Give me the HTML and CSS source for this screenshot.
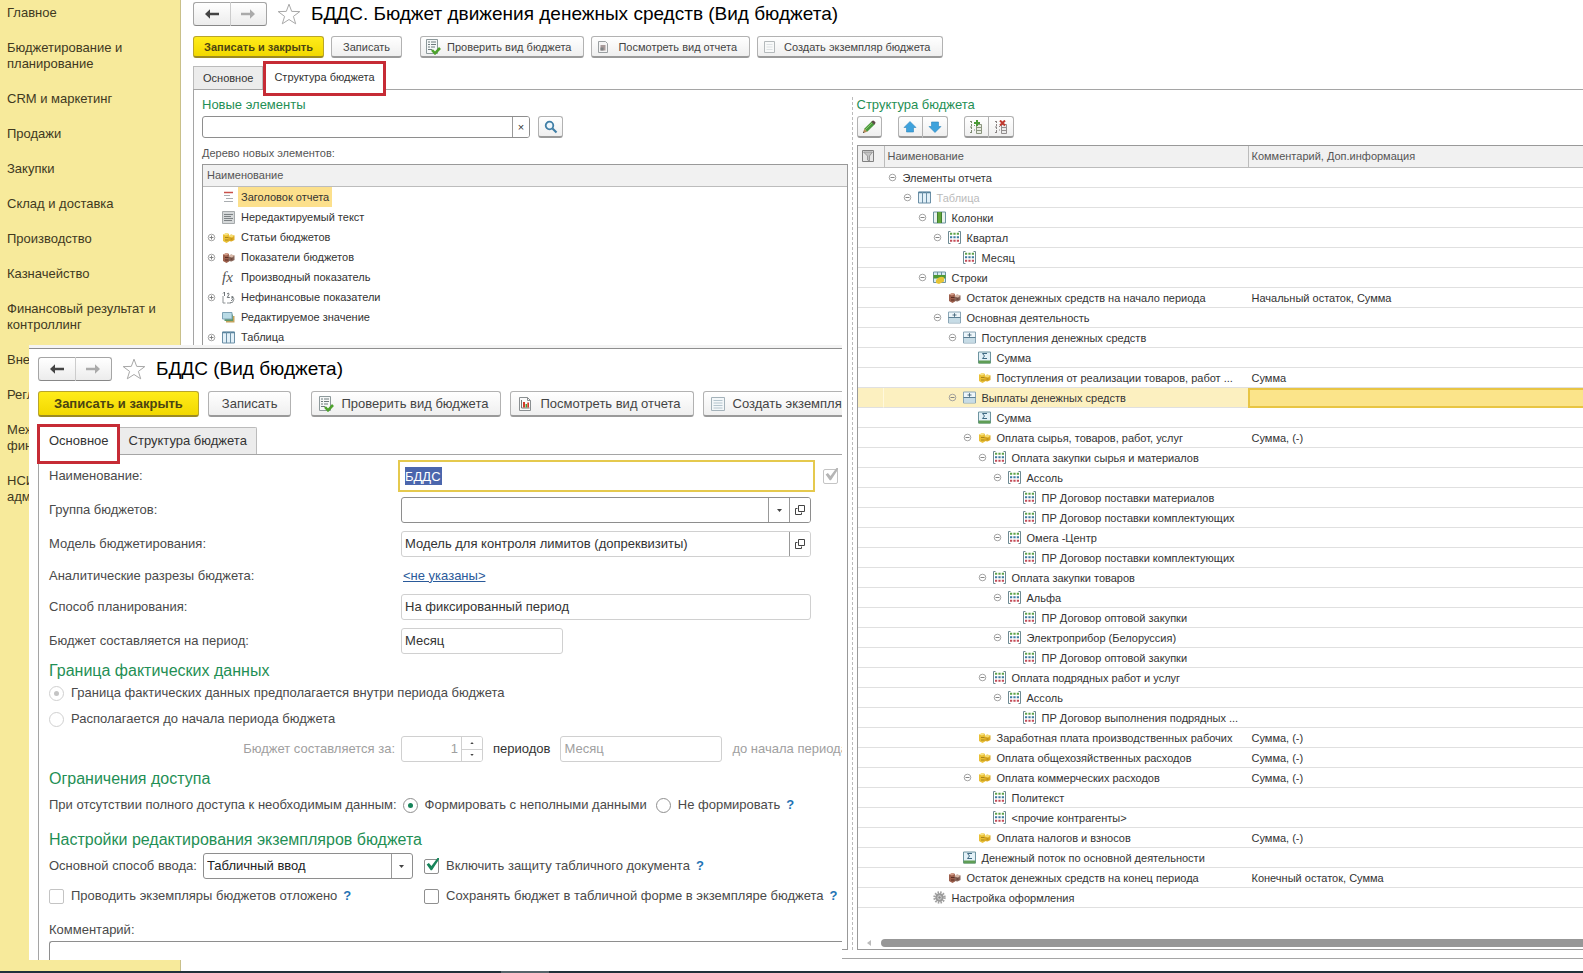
FILE: index.html
```html
<!DOCTYPE html>
<html lang="ru">
<head>
<meta charset="utf-8">
<title>БДДС. Бюджет движения денежных средств (Вид бюджета)</title>
<link rel="stylesheet" href="styles.css">
</head>
<body>
<svg class="sprite" aria-hidden="true">
  <symbol id="back" viewBox="0 0 14 10"><path d="M0 5 5 0.3 5 3.8 14 3.8 14 6.2 5 6.2 5 9.7z" fill="currentColor"/></symbol>
  <symbol id="fwd" viewBox="0 0 14 10"><path d="M14 5 9 0.3 9 3.8 0 3.8 0 6.2 9 6.2 9 9.7z" fill="currentColor"/></symbol>
  <symbol id="star" viewBox="0 0 24 22"><path d="M12 1.2 14.7 8.4 22.8 8.6 16.4 13.4 18.7 20.8 12 16.5 5.3 20.8 7.6 13.4 1.2 8.6 9.3 8.4z" fill="#fff" stroke="#a8a8a8"/></symbol>
  <symbol id="check-doc" viewBox="0 0 16 16"><path d="M1.5 .5h11v14h-11z" fill="#f5f7f7" stroke="#8d999b"/><path d="M3 3h2M6 3h5M3 5.5h2M6 5.5h5M3 8h2M6 8h4M3 10.500h4" stroke="#6d7a7c"/><path d="m7 11 3 3.300 5-5.300" fill="none" stroke="#4da22c" stroke-width="2.600"/></symbol>
  <symbol id="report" viewBox="0 0 16 16"><path d="M2.500 1.500h8l3 3v10h-11z" fill="#fafafa" stroke="#8a8f91"/><path d="M10.500 1.500v3h3" fill="none" stroke="#8a8f91"/><path d="M4.500 4v8h8" fill="none" stroke="#777"/><path d="M6 6h2v5.500H6z" fill="#d33a28"/><path d="M8.500 8h1.500v3.500H8.500z" fill="#4a9b3c"/><path d="M10.300 6.500h1.700v5h-1.700z" fill="#d33a28"/></symbol>
  <symbol id="report-gray" viewBox="0 0 16 16"><path d="M2.500 2.500h7l2 2v9h-9z" fill="#f4f4f4" stroke="#9a9fa1"/><path d="M4.500 6h5v5.500h-5z" fill="#a89a9a"/><path d="M4.500 8.500h3v3h-3z" fill="#7f8385"/></symbol>
  <symbol id="sheet" viewBox="0 0 16 16"><path d="M1.500 1.500h13v13h-13z" fill="#f3f7f9" stroke="#a4b2ba"/><path d="M3.500 4.500h9M3.500 7h9M3.500 9.500h9M3.500 12h9" stroke="#b5c5ce"/></symbol>
  <symbol id="sheet-gray" viewBox="0 0 16 16"><path d="M2.500 2.500h10v11h-10z" fill="#f8f9f9" stroke="#b4b9bb"/><path d="M4.500 5.500h6M4.500 8h6M4.500 10.500h6" stroke="#dde1e3"/></symbol>
  <symbol id="search" viewBox="0 0 14 14"><circle cx="5.500" cy="5.500" r="3.800" fill="#eef6fb" stroke="#3f7ea6" stroke-width="1.800"/><path d="m8.500 8.500 4 4" stroke="#3f7ea6" stroke-width="2.200"/></symbol>
  <symbol id="pencil" viewBox="0 0 14 14"><path d="m1 13 1.200-4.200 3 3z" fill="#b98b55"/><path d="M2.200 8.800 9.600 1.500l3 3-7.400 7.300z" fill="#4a9a3d"/><path d="m3.200 9.800 7.400-7.300" stroke="#8cc56c"/><path d="m9.300 1.800 1.200-1.100q.8-.5 1.600.2l1.100 1.100q.7.900 0 1.600l-1 1.100z" fill="#5d4a48"/><path d="m1 13 .5-1.600 1 1.100z" fill="#333"/></symbol>
  <symbol id="up" viewBox="0 0 14 14"><path d="M7 1.500 13 7.500H10.500V12H3.500V7.500H1z" fill="#3ea2dc" stroke="#2d86bd" stroke-width=".6"/></symbol>
  <symbol id="down" viewBox="0 0 14 14"><path d="M7 12.500 1 6.500H3.500V2h7v4.500H13z" fill="#3ea2dc" stroke="#2d86bd" stroke-width=".6"/></symbol>
  <symbol id="list-add" viewBox="0 0 14 14"><path d="M2.500 1v12M1 1.500h3M1 7h3M1 12.500h3M5 5.500h1M5 10h1" stroke="#7c8a72" stroke-dasharray="2 1"/><path d="M7.500 4.500h5v9h-5zM7.500 7.500h5M7.500 10.500h5" fill="#e8ece2" stroke="#8b967f"/><path d="M8 0v6M5 3h6" stroke="#4a9a35" stroke-width="2"/></symbol>
  <symbol id="list-del" viewBox="0 0 14 14"><path d="M2.500 1v12M1 1.500h3M1 7h3M1 12.500h3M5 6.500h1M5 10h1" stroke="#8a8585" stroke-dasharray="2 1"/><path d="M7.500 4.500h5v9h-5zM7.500 7.500h5M7.500 10.500h5" fill="#ececec" stroke="#938f8f"/><path d="m6 .5 5 5M11 .5 6 5.500" stroke="#c0392f" stroke-width="2"/></symbol>
  <symbol id="funnel" viewBox="0 0 12 12"><path d="M.5.500h11v11H.5z" fill="#e6e6e6" stroke="#808080"/><path d="M1.500 2h9L7.500 6v5l-2-1V6z" fill="#c4c4c4" stroke="#8c8c8c" stroke-width=".8"/></symbol>
  <symbol id="plus" viewBox="0 0 9 9"><circle cx="4.500" cy="4.500" r="3.300" fill="#fff" stroke="#9a9a9a" stroke-width=".9"/><path d="M2.500 4.500h4M4.500 2.500v4" stroke="#777" stroke-width=".9"/></symbol>
  <symbol id="minus" viewBox="0 0 9 9"><circle cx="4.500" cy="4.500" r="3.300" fill="none" stroke="#9a9a9a" stroke-width=".9"/><path d="M2.500 4.500h4" stroke="#777" stroke-width=".9"/></symbol>
  <symbol id="heading" viewBox="0 0 13 13"><path d="M2 1.500h9" stroke="#c9504a" stroke-width="1.500"/><path d="M2 4.500h6M4 7.500h7M2 10.500h9" stroke="#a9adb0"/></symbol>
  <symbol id="text" viewBox="0 0 13 13"><path d="M.5.500h12v12H.5z" fill="#d5d8d9" stroke="#a5a9ab"/><path d="M2 3.500h9M2 5.500h7M2 7.500h9M2 9.500h8" stroke="#7c8184"/></symbol>
  <symbol id="gold" viewBox="0 0 13 13"><path d="M1 3.500 4.500 2 7 3v7.500L4.500 12 1 10z" fill="#e9bf35"/><path d="M1 3.500 4.500 2 7 3 4 4.500z" fill="#f8e486"/><path d="M6.500 5.500 9 3.500l3.500 1V9L9.500 10.500l-3-.5z" fill="#dca922"/><path d="m6.500 5.500 2.500-2 3.500 1L10 6.500z" fill="#f5dc70"/><path d="M3 6.500h3.500M3 9h3.500M8.500 8h2" stroke="#a8851c"/></symbol>
  <symbol id="brown" viewBox="0 0 13 13"><path d="M1 3.500 4.500 2 7 3v7.500L4.500 12 1 10z" fill="#9c5f4c"/><path d="M1 3.500 4.500 2 7 3 4 4.500z" fill="#d5a08c"/><path d="M6.500 5.500 9 3.500l3.500 1V9L9.500 10.500l-3-.5z" fill="#86655a"/><path d="m6.500 5.500 2.500-2 3.500 1L10 6.500z" fill="#d9b9a8"/><path d="M3 6.500h3.500M3 9h3.500M8.500 8h2" stroke="#5a2e24"/></symbol>
  <symbol id="numbers" viewBox="0 0 13 13"><path d="M1 5v7h2.500M5 12h4M10.500 5q3 3 0 6.500M10.500 11.500H8" fill="none" stroke="#8d9294"/><path d="M1 2.500 2.500 1v4M5 3q2-2 2 .3L5.300 6.500h2.500M9 6h2L9.800 7.500q1.700.5 0 2H9" fill="none" stroke="#60666a" stroke-width=".9"/></symbol>
  <symbol id="layers" viewBox="0 0 13 13"><path d="M4 5h8.500v6.500H4z" fill="#c3a35c"/><path d="M2.500 3.500h8.500V10H2.500z" fill="#5e9968"/><path d="M.5 1.500h9.500v6.500H.5z" fill="#b9dbe6" stroke="#7da2b5"/></symbol>
  <symbol id="table" viewBox="0 0 13 13"><path d="M.5 1h12v11H.5z" fill="#e2f0f8" stroke="#6b8fa6"/><path d="M.5 1.500h12" stroke="#57839d" stroke-width="1.500"/><path d="M4.500 1v11M8.500 1v11" stroke="#6b8fa6"/></symbol>
  <symbol id="columns" viewBox="0 0 13 13"><path d="M.5 1h12v11H.5z" fill="#e8f2ee" stroke="#6d94a0"/><path d="M4 1h5v11H4z" fill="#62a53a"/><path d="M4.500 1v11M8.500 1v11" stroke="#3f7d32"/></symbol>
  <symbol id="grid" viewBox="0 0 13 13"><path d="M2.500.5h-2v12h2M10.500.5h2v12h-2" fill="none" stroke="#6d8a93"/><path d="M2 2.800h2.200M5.400 2.800h2.200M8.800 2.800H11" stroke="#5ca14a" stroke-width="2"/><path d="M2 6.300h2.200M5.400 6.300h2.200M8.800 6.300H11" stroke="#3f7d9f" stroke-width="2"/><path d="M2 9.800h2.200M5.400 9.800h2.200M8.800 9.800H11" stroke="#c24c58" stroke-width="2"/></symbol>
  <symbol id="rows" viewBox="0 0 13 13"><path d="M.5 1h12v10.500H.5z" fill="#d8eaf2" stroke="#6d94a0"/><path d="M.5 4h12v3.500H.5z" fill="#4e9a35"/><path d="M4.500 1v3M8.500 1v3" stroke="#6d94a0"/><path d="M3 9q4-5 8-2.500v4L6 13 3 12z" fill="#e5c436"/></symbol>
  <symbol id="group" viewBox="0 0 13 13"><path d="M.5 1h12v11H.5z" fill="#eef6fa" stroke="#8aa6b6"/><path d="M1 7h11v4.500H1z" fill="#c7dce6"/><path d="M.5 6.500h12" stroke="#5c7f93"/><path d="M4.500 4h4M6.500 2.200v3.600" stroke="#4f6f82"/></symbol>
  <symbol id="sum" viewBox="0 0 13 13"><path d="M.5 1h12v11H.5z" fill="#e3f1f7" stroke="#6d94a0"/><path d="M.5 9.500h12v3H.5z" fill="#5f9d55"/><path d="M9 2.500H4.500l2 2.500-2 2.500H9" fill="none" stroke="#3f6982"/></symbol>
  <symbol id="gear" viewBox="0 0 13 13"><circle cx="6.500" cy="6.500" r="5" fill="none" stroke="#a0a0a0" stroke-width="2.400" stroke-dasharray="1.500 1.120"/><circle cx="6.500" cy="6.500" r="3.200" fill="#d0d0d0" stroke="#999" stroke-width="2"/><circle cx="6.500" cy="6.500" r="1.200" fill="#888"/></symbol>
  <symbol id="open" viewBox="0 0 10 10"><path d="M3.500.500h6v6h-6z" fill="none" stroke="#444"/><path d="M2.500 3.500H.5v6h6v-2" fill="none" stroke="#444"/></symbol>
  <symbol id="caret" viewBox="0 0 5 3"><path d="M0 0h5L2.500 3z" fill="#444"/></symbol>
</svg>

<div class="app">
  <nav class="sidebar" aria-label="Разделы">
    <a href="#">Главное</a>
    <a href="#">Бюджетирование и<br>планирование</a>
    <a href="#">CRM и маркетинг</a>
    <a href="#">Продажи</a>
    <a href="#">Закупки</a>
    <a href="#">Склад и доставка</a>
    <a href="#">Производство</a>
    <a href="#">Казначейство</a>
    <a href="#">Финансовый результат и<br>контроллинг</a>
    <a href="#">Вне</a>
    <a href="#">Регл</a>
    <a href="#">Меж<br>фин</a>
    <a href="#">НСИ<br>адм</a>
  </nav>

  <main class="main">
    <header class="head">
      <div class="history">
        <button type="button" aria-label="Назад"><svg><use href="#back"/></svg></button><button type="button" class="off" aria-label="Вперед"><svg><use href="#fwd"/></svg></button>
      </div>
      <svg class="star"><use href="#star"/></svg>
      <h1>БДДС. Бюджет движения денежных средств (Вид бюджета)</h1>
    </header>
    <div class="toolbar">
      <button type="button" class="btn primary">Записать и закрыть</button>
      <button type="button" class="btn save">Записать</button>
      <button type="button" class="btn"><svg><use href="#check-doc"/></svg>Проверить вид бюджета</button>
      <button type="button" class="btn"><svg><use href="#report-gray"/></svg>Посмотреть вид отчета</button>
      <button type="button" class="btn"><svg><use href="#sheet-gray"/></svg>Создать экземпляр бюджета</button>
    </div>
    <div class="tabs">
      <button type="button" class="tab">Основное</button>
      <button type="button" class="tab marked">Структура бюджета</button>
    </div>
    <div class="panel">
      <section class="pane">
        <h2>Новые элементы</h2>
        <div class="search">
          <div class="field"><input type="text" aria-label="Поиск"><button type="button" aria-label="Очистить">×</button></div>
          <button type="button" class="btn icon" aria-label="Найти"><svg><use href="#search"/></svg></button>
        </div>
        <p class="caption">Дерево новых элементов:</p>
        <div class="box full">
          <table class="tree plain">
            <thead><tr><th>Наименование</th></tr></thead>
            <tbody>
              <tr><td><div class="node"><i></i><svg><use href="#heading"/></svg><span class="picked">Заголовок отчета</span></div></td></tr>
              <tr><td><div class="node"><i></i><svg><use href="#text"/></svg><span>Нередактируемый текст</span></div></td></tr>
              <tr><td><div class="node"><svg class="tw"><use href="#plus"/></svg><svg><use href="#gold"/></svg><span>Статьи бюджетов</span></div></td></tr>
              <tr><td><div class="node"><svg class="tw"><use href="#plus"/></svg><svg><use href="#brown"/></svg><span>Показатели бюджетов</span></div></td></tr>
              <tr><td><div class="node"><i></i><em>fx</em><span>Производный показатель</span></div></td></tr>
              <tr><td><div class="node"><svg class="tw"><use href="#plus"/></svg><svg><use href="#numbers"/></svg><span>Нефинансовые показатели</span></div></td></tr>
              <tr><td><div class="node"><i></i><svg><use href="#layers"/></svg><span>Редактируемое значение</span></div></td></tr>
              <tr><td><div class="node"><svg class="tw"><use href="#plus"/></svg><svg><use href="#table"/></svg><span>Таблица</span></div></td></tr>
            </tbody>
          </table>
        </div>
      </section>
      <div class="splitter"></div>
      <section class="pane">
        <h2>Структура бюджета</h2>
        <div class="tools">
          <div class="set"><button type="button" aria-label="Изменить"><svg><use href="#pencil"/></svg></button></div>
          <div class="set"><button type="button" aria-label="Вверх"><svg><use href="#up"/></svg></button><button type="button" aria-label="Вниз"><svg><use href="#down"/></svg></button></div>
          <div class="set"><button type="button" aria-label="Добавить"><svg><use href="#list-add"/></svg></button><button type="button" aria-label="Удалить"><svg><use href="#list-del"/></svg></button></div>
        </div>
        <div class="box open">
          <table class="tree lined">
            <colgroup><col class="c-mark"><col class="c-name"><col></colgroup>
            <thead><tr><th><svg class="funnel"><use href="#funnel"/></svg></th><th>Наименование</th><th>Комментарий, Доп.информация</th></tr></thead>
            <tbody>
              <tr><td></td><td><div class="node l0"><svg class="tw"><use href="#minus"/></svg><span>Элементы отчета</span></div></td><td></td></tr>
              <tr><td></td><td><div class="node l1"><svg class="tw"><use href="#minus"/></svg><svg><use href="#table"/></svg><span class="dim">Таблица</span></div></td><td></td></tr>
              <tr><td></td><td><div class="node l2"><svg class="tw"><use href="#minus"/></svg><svg><use href="#columns"/></svg><span>Колонки</span></div></td><td></td></tr>
              <tr><td></td><td><div class="node l3"><svg class="tw"><use href="#minus"/></svg><svg><use href="#grid"/></svg><span>Квартал</span></div></td><td></td></tr>
              <tr><td></td><td><div class="node l4"><i></i><svg><use href="#grid"/></svg><span>Месяц</span></div></td><td></td></tr>
              <tr><td></td><td><div class="node l2"><svg class="tw"><use href="#minus"/></svg><svg><use href="#rows"/></svg><span>Строки</span></div></td><td></td></tr>
              <tr><td></td><td><div class="node l3"><i></i><svg><use href="#brown"/></svg><span>Остаток денежных средств на начало периода</span></div></td><td>Начальный остаток, Сумма</td></tr>
              <tr><td></td><td><div class="node l3"><svg class="tw"><use href="#minus"/></svg><svg><use href="#group"/></svg><span>Основная деятельность</span></div></td><td></td></tr>
              <tr><td></td><td><div class="node l4"><svg class="tw"><use href="#minus"/></svg><svg><use href="#group"/></svg><span>Поступления денежных средств</span></div></td><td></td></tr>
              <tr><td></td><td><div class="node l5"><i></i><svg><use href="#sum"/></svg><span>Сумма</span></div></td><td></td></tr>
              <tr><td></td><td><div class="node l5"><i></i><svg><use href="#gold"/></svg><span>Поступления от реализации товаров, работ ...</span></div></td><td>Сумма</td></tr>
              <tr class="current"><td></td><td><div class="node l4"><svg class="tw"><use href="#minus"/></svg><svg><use href="#group"/></svg><span>Выплаты денежных средств</span></div></td><td></td></tr>
              <tr><td></td><td><div class="node l5"><i></i><svg><use href="#sum"/></svg><span>Сумма</span></div></td><td></td></tr>
              <tr><td></td><td><div class="node l5"><svg class="tw"><use href="#minus"/></svg><svg><use href="#gold"/></svg><span>Оплата сырья, товаров, работ, услуг</span></div></td><td>Сумма, (-)</td></tr>
              <tr><td></td><td><div class="node l6"><svg class="tw"><use href="#minus"/></svg><svg><use href="#grid"/></svg><span>Оплата закупки сырья и материалов</span></div></td><td></td></tr>
              <tr><td></td><td><div class="node l7"><svg class="tw"><use href="#minus"/></svg><svg><use href="#grid"/></svg><span>Ассоль</span></div></td><td></td></tr>
              <tr><td></td><td><div class="node l8"><i></i><svg><use href="#grid"/></svg><span>ПР Договор поставки материалов</span></div></td><td></td></tr>
              <tr><td></td><td><div class="node l8"><i></i><svg><use href="#grid"/></svg><span>ПР Договор поставки комплектующих</span></div></td><td></td></tr>
              <tr><td></td><td><div class="node l7"><svg class="tw"><use href="#minus"/></svg><svg><use href="#grid"/></svg><span>Омега -Центр</span></div></td><td></td></tr>
              <tr><td></td><td><div class="node l8"><i></i><svg><use href="#grid"/></svg><span>ПР Договор поставки комплектующих</span></div></td><td></td></tr>
              <tr><td></td><td><div class="node l6"><svg class="tw"><use href="#minus"/></svg><svg><use href="#grid"/></svg><span>Оплата закупки товаров</span></div></td><td></td></tr>
              <tr><td></td><td><div class="node l7"><svg class="tw"><use href="#minus"/></svg><svg><use href="#grid"/></svg><span>Альфа</span></div></td><td></td></tr>
              <tr><td></td><td><div class="node l8"><i></i><svg><use href="#grid"/></svg><span>ПР Договор оптовой закупки</span></div></td><td></td></tr>
              <tr><td></td><td><div class="node l7"><svg class="tw"><use href="#minus"/></svg><svg><use href="#grid"/></svg><span>Электроприбор (Белоруссия)</span></div></td><td></td></tr>
              <tr><td></td><td><div class="node l8"><i></i><svg><use href="#grid"/></svg><span>ПР Договор оптовой закупки</span></div></td><td></td></tr>
              <tr><td></td><td><div class="node l6"><svg class="tw"><use href="#minus"/></svg><svg><use href="#grid"/></svg><span>Оплата подрядных работ и услуг</span></div></td><td></td></tr>
              <tr><td></td><td><div class="node l7"><svg class="tw"><use href="#minus"/></svg><svg><use href="#grid"/></svg><span>Ассоль</span></div></td><td></td></tr>
              <tr><td></td><td><div class="node l8"><i></i><svg><use href="#grid"/></svg><span>ПР Договор выполнения подрядных ...</span></div></td><td></td></tr>
              <tr><td></td><td><div class="node l5"><i></i><svg><use href="#gold"/></svg><span>Заработная плата производственных рабочих</span></div></td><td>Сумма, (-)</td></tr>
              <tr><td></td><td><div class="node l5"><i></i><svg><use href="#gold"/></svg><span>Оплата общехозяйственных расходов</span></div></td><td>Сумма, (-)</td></tr>
              <tr><td></td><td><div class="node l5"><svg class="tw"><use href="#minus"/></svg><svg><use href="#gold"/></svg><span>Оплата коммерческих расходов</span></div></td><td>Сумма, (-)</td></tr>
              <tr><td></td><td><div class="node l6"><i></i><svg><use href="#grid"/></svg><span>Политекст</span></div></td><td></td></tr>
              <tr><td></td><td><div class="node l6"><i></i><svg><use href="#grid"/></svg><span>&lt;прочие контрагенты&gt;</span></div></td><td></td></tr>
              <tr><td></td><td><div class="node l5"><i></i><svg><use href="#gold"/></svg><span>Оплата налогов и взносов</span></div></td><td>Сумма, (-)</td></tr>
              <tr><td></td><td><div class="node l4"><i></i><svg><use href="#sum"/></svg><span>Денежный поток по основной деятельности</span></div></td><td></td></tr>
              <tr><td></td><td><div class="node l3"><i></i><svg><use href="#brown"/></svg><span>Остаток денежных средств на конец периода</span></div></td><td>Конечный остаток, Сумма</td></tr>
              <tr><td></td><td><div class="node l2"><i></i><svg><use href="#gear"/></svg><span>Настройка оформления</span></div></td><td></td></tr>
            </tbody>
          </table>
          <div class="hscroll"><span class="arrow"></span><span class="thumb"></span></div>
        </div>
      </section>
    </div>
  </main>
  <footer class="taskbar"><span></span></footer>
</div>

<section class="window">
  <div class="edge"></div>
  <div class="inner">
    <header class="head">
      <div class="history">
        <button type="button" aria-label="Назад"><svg><use href="#back"/></svg></button><button type="button" class="off" aria-label="Вперед"><svg><use href="#fwd"/></svg></button>
      </div>
      <svg class="star"><use href="#star"/></svg>
      <h1>БДДС (Вид бюджета)</h1>
    </header>
    <div class="toolbar">
      <button type="button" class="btn primary">Записать и закрыть</button>
      <button type="button" class="btn save">Записать</button>
      <button type="button" class="btn"><svg><use href="#check-doc"/></svg>Проверить вид бюджета</button>
      <button type="button" class="btn"><svg><use href="#report"/></svg>Посмотреть вид отчета</button>
      <button type="button" class="btn"><svg><use href="#sheet"/></svg>Создать экземпляр</button>
    </div>
    <div class="tabs">
      <button type="button" class="tab marked">Основное</button>
      <button type="button" class="tab">Структура бюджета</button>
    </div>
    <form class="form">
      <div class="row"><label class="name" for="f-name">Наименование:</label><input class="focused" id="f-name" type="text" value="БДДС"><input type="checkbox" class="faded" checked disabled aria-label="Проверено"></div>
      <div class="row"><label class="name" for="f-group">Группа бюджетов:</label><div class="field wide"><input id="f-group" type="text"><button type="button" aria-label="Выбрать"><svg class="caret"><use href="#caret"/></svg></button><button type="button" aria-label="Открыть"><svg class="go"><use href="#open"/></svg></button></div></div>
      <div class="row"><label class="name" for="f-model">Модель бюджетирования:</label><div class="field wide light"><input id="f-model" type="text" readonly value="Модель для контроля лимитов (допреквизиты)"><button type="button" aria-label="Открыть"><svg class="go"><use href="#open"/></svg></button></div></div>
      <div class="row low"><span class="name">Аналитические разрезы бюджета:</span><a class="link" href="#">&lt;не указаны&gt;</a></div>
      <div class="row"><label class="name" for="f-way">Способ планирования:</label><div class="field wide light"><input id="f-way" type="text" readonly value="На фиксированный период"></div></div>
      <div class="row"><label class="name" for="f-period">Бюджет составляется на период:</label><div class="field short light"><input id="f-period" type="text" readonly value="Месяц"></div></div>

      <h3>Граница фактических данных</h3>
      <div class="row slim"><input type="radio" name="edge" id="r1" checked disabled><label for="r1">Граница фактических данных предполагается внутри периода бюджета</label></div>
      <div class="row"><input type="radio" name="edge" id="r2" disabled><label for="r2">Располагается до начала периода бюджета</label></div>
      <div class="row mid muted"><label class="name end" for="f-count">Бюджет составляется за:</label><div class="field count light"><input id="f-count" type="text" disabled value="1"><div class="spin"><button type="button" disabled aria-label="Больше"><svg class="tick up"><use href="#caret"/></svg></button><button type="button" disabled aria-label="Меньше"><svg class="tick"><use href="#caret"/></svg></button></div></div><span class="strong">периодов</span><div class="field short light"><input type="text" disabled value="Месяц" aria-label="Период"></div><span class="tail">до начала периода</span></div>

      <h3 class="tall">Ограничения доступа</h3>
      <div class="row slim"><span class="lead">При отсутствии полного доступа к необходимым данным:</span><input type="radio" name="access" id="r3" checked><label class="first" for="r3">Формировать с неполными данными</label><input type="radio" name="access" id="r4"><label for="r4">Не формировать</label><a class="help" href="#">?</a></div>

      <h3 class="apart">Настройки редактирования экземпляров бюджета</h3>
      <div class="row mid pair"><div class="half"><label class="lead" for="f-input">Основной способ ввода:</label><div class="picker"><select id="f-input"><option>Табличный ввод</option></select><span><svg class="caret"><use href="#caret"/></svg></span></div></div><div class="half"><input type="checkbox" id="c1" checked><label for="c1">Включить защиту табличного документа</label><a class="help" href="#">?</a></div></div>
      <div class="row pair"><div class="half"><input type="checkbox" class="pale" id="c2"><label for="c2">Проводить экземпляры бюджетов отложено</label><a class="help" href="#">?</a></div><div class="half"><input type="checkbox" id="c3"><label for="c3">Сохранять бюджет в табличной форме в экземпляре бюджета</label><a class="help" href="#">?</a></div></div>
      <div class="note"><label for="f-note">Комментарий:</label><textarea id="f-note"></textarea></div>
    </form>
  </div>
</section>
</body>
</html>
```
FILE: styles.css
```css
* { box-sizing: border-box; }

body {
  margin: 0;
  position: relative;
  min-height: 100vh;
  overflow: hidden;
  background: #fff;
  color: #333;
  font: 11px/14px "Liberation Sans", Arial, sans-serif;
}

button, input, select, textarea {
  font: inherit;
  color: inherit;
  margin: 0;
}
h1, h2, h3, p { margin: 0; font-weight: normal; }
svg { flex: none; display: block; }
.sprite { position: absolute; width: 0; height: 0; }

.app {
  display: grid;
  grid-template: 1fr 2px / 181px minmax(0, 1fr);
  min-height: 100vh;
}

/* Sections */
.sidebar {
  display: flex;
  flex-direction: column;
  gap: 19px;
  padding: 5px 0 0 7px;
  background: #f7ea9b;
  border-right: 1px solid #c9c08a;
  font-size: 13px;
  line-height: 16px;
}
.sidebar a { color: #40391f; text-decoration: none; white-space: nowrap; }

.taskbar { grid-column: 1 / -1; background: #22313a; }
.taskbar span { display: block; width: 48px; height: 2px; margin-left: 501px; background: #56646a; }

/* Form header */
.main { display: flex; flex-direction: column; padding: 2px 0 12px 12px; }
.head { display: flex; align-items: center; height: 24px; }
.history { display: flex; width: 74px; height: 24px; }
.history button {
  flex: 1;
  display: grid;
  place-items: center;
  padding: 0;
  border: 1px solid #a5a5a5;
  border-bottom-color: #888;
  border-right-color: #ccc;
  border-radius: 3px 0 0 3px;
  background: linear-gradient(#fff, #ececec);
  color: #444;
}
.history .off { color: #aaa; border-left: 0; border-right-color: #a5a5a5; border-radius: 0 3px 3px 0; }
.history svg { width: 14px; height: 10px; }
.star { width: 24px; height: 22px; margin: 0 10px; }
h1 { color: #000; font-size: 19px; line-height: 24px; white-space: nowrap; }

.toolbar { display: flex; gap: 7px; height: 22px; margin-top: 10px; }
.btn {
  display: flex;
  align-items: center;
  justify-content: center;
  gap: 6px;
  padding: 0 12px 0 4px;
  border: 1px solid #b2b2b2;
  border-bottom: 2px solid #9a9a9a;
  border-radius: 3px;
  background: linear-gradient(#fff, #efefef);
  color: #444;
  white-space: nowrap;
}
.btn svg { width: 16px; height: 16px; }
.primary {
  padding: 0 10px;
  border-color: #b9a52a;
  border-bottom-color: #9c8b22;
  background: linear-gradient(#ffec1a, #f2d800);
  color: #4b4412;
  font-weight: bold;
}
.save { padding: 0 11px; margin-right: 11px; }

.tabs { display: flex; height: 23px; margin-top: 8px; }
.tab {
  padding: 0 9px;
  border: 1px solid #bbb;
  border-bottom: 0;
  background: #ececec;
  white-space: nowrap;
}
.marked { background: #fff; border: 0; border-radius: 0; outline: 3px solid #c62b35; z-index: 1; }
.main .marked { margin: -2px 0 -4px 3px; padding: 0 8px 4px; }

.panel {
  flex: 1;
  display: grid;
  grid-template-columns: minmax(0, 646fr) 9px minmax(0, 727fr);
  padding: 7px 0 8px 8px;
  border: 1px solid #a5a5a5;
  border-right: 0;
}
.pane { display: flex; flex-direction: column; }
h2 { color: #1f8f55; font-size: 13px; line-height: 16px; }
.splitter { justify-self: center; border-left: 1px dashed #bbb; }

.search { display: flex; gap: 8px; height: 22px; margin-top: 3px; }
.field {
  display: flex;
  overflow: hidden;
  border: 1px solid #8e8e8e;
  border-radius: 3px;
  background: #fff;
}
.field input { flex: 1; min-width: 0; padding: 0 3px; border: 0; background: none; }
.field button {
  display: grid;
  place-items: center;
  width: 21px;
  padding: 0;
  border: 0;
  border-left: 1px solid #999;
  background: #fff;
}
.search .field { width: 328px; }
.search .field button { width: 17px; }
.search .icon { width: 25px; padding: 0; }
.icon svg { width: 14px; height: 14px; }
.caption { margin: 8px 0 4px; color: #555; }

.tools { display: flex; gap: 16px; height: 22px; margin-top: 3px; }
.set { display: flex; }
.set button {
  display: grid;
  place-items: center;
  width: 25px;
  padding: 0;
  border: 1px solid #b2b2b2;
  border-bottom: 2px solid #9a9a9a;
  border-radius: 3px;
  background: linear-gradient(#fff, #efefef);
}
.set button + button { border-left: 0; border-radius: 0 3px 3px 0; }
.set button:not(:last-child) { border-radius: 3px 0 0 3px; }
.set svg { width: 14px; height: 14px; }

/* Trees */
.box { flex: 1; display: flex; flex-direction: column; border: 1px solid #999; }
.open { margin-top: 7px; border-right: 0; }
.tree { width: 100%; table-layout: fixed; border-collapse: separate; border-spacing: 0; }
.c-mark { width: 26px; }
.c-name { width: 364px; }
.tree th {
  height: 22px;
  padding: 0 4px 2px;
  border-bottom: 1px solid #bcbcbc;
  background: #f1f1f1;
  color: #555;
  font-weight: normal;
  text-align: left;
}
.tree td { height: 20px; padding: 0; white-space: nowrap; }
.lined th:not(:first-child) { padding-left: 3px; border-left: 1px solid #bcbcbc; }
.lined td { border-bottom: 1px solid #e0e0e0; }
.lined td:last-child { padding-left: 4px; }
.funnel { width: 12px; height: 12px; }
.node { display: flex; align-items: center; height: 19px; }
.node svg, .node em { width: 13px; height: 13px; margin-right: 6px; }
.node .tw, .node i { width: 9px; height: 9px; margin-right: 6px; flex: none; }
.node em { flex: none; color: #555; font: italic 15px/12px "Liberation Serif", serif; }
.plain .node { height: 20px; padding-left: 4px; }
.plain .node span { padding: 3px; margin-left: -3px; }
.plain .node .picked { background: #fce08c; }
.l0 { padding-left: 4px; }
.l1 { padding-left: 19px; }
.l2 { padding-left: 34px; }
.l3 { padding-left: 49px; }
.l4 { padding-left: 64px; }
.l5 { padding-left: 79px; }
.l6 { padding-left: 94px; }
.l7 { padding-left: 109px; }
.l8 { padding-left: 124px; }
.dim { color: #bbb; }
.current td { background: #fcf0c0; }
.current td:first-child { border-right: 1px solid #fff8dc; }
.current td:last-child { background: #fbe48a; border: 2px solid #e8c544; border-right: 0; }

.hscroll { display: flex; align-items: center; gap: 10px; margin: auto 0 2px 9px; }
.arrow { border: 3px solid transparent; border-right: 4px solid #bbb; border-left: 0; }
.thumb { flex: 1; height: 8px; border-radius: 4px 0 0 4px; background: #979797; }

/* Second window, lying over the first */
.window {
  position: absolute;
  left: 29px;
  top: 345px;
  bottom: 13px;
  width: 813px;
  overflow: hidden;
  background: #fff;
  font-size: 13px;
  line-height: 16px;
}
.edge { height: 4px; background: #f4f4f4; border-bottom: 1px solid #8e8e8e; }
.inner { padding: 8px 0 0 9px; }
.window .toolbar { gap: 9px; height: 26px; margin-top: 10px; }
.window .btn { padding: 0 12px 0 6px; gap: 7px; flex: none; }
.window .primary { padding: 0 15px; }
.window .save { padding: 0 13px; }
.window .tabs { height: 27px; margin-top: 10px; }
.window .tab { padding: 0 9px; border-radius: 0 2px 0 0; }
.window .marked { padding: 0 8px 7px 9px; margin: 0 2px -7px; border-radius: 0; }

.form { border: 1px solid #a5a5a5; border-right: 0; border-bottom: 0; padding: 4px 0 0 10px; color: #4a4a4a; }
.row { display: flex; align-items: center; height: 34px; white-space: nowrap; }
.low { height: 29px; }
.slim { height: 18px; }
.mid { height: 26px; }
.name { flex: none; width: 352px; }
.end { padding-right: 6px; text-align: right; }
.row .field { flex: none; height: 26px; color: #333; }
.wide { width: 410px; }
.short { width: 162px; }
.count { width: 82px; }
.row .light { border-color: #d0d0d0; }
.focused {
  flex: none;
  width: 417px;
  height: 32px;
  margin: 0 8px 0 -3px;
  padding: 0 5px;
  border: 2px solid #e5c94e;
  background: linear-gradient(#4b66ad, #4b66ad) 5px center / 37px 18px no-repeat #fff;
  color: #fff;
  outline: 0;
}
.caret { width: 5px; height: 3px; }
.go { width: 10px; height: 10px; }
.link { margin-left: 2px; color: #2a5a9a; }
.muted, .row.muted .field { color: #a0a0a0; }
.row .strong { margin: 0 10px; color: #333; }
.tail { margin-left: 10px; }
.count input { text-align: right; }
.spin { display: flex; flex-direction: column; width: 21px; }
.spin button { flex: 1; border-color: #d0d0d0; }
.spin button + button { border-top: 1px solid #d0d0d0; }
.tick { width: 4px; height: 2px; }
.up { transform: rotate(180deg); }

h3 { color: #1f8f55; font-size: 16px; line-height: 26px; }
.tall { line-height: 34px; }
.apart { margin-top: 13px; }

input[type="radio"], input[type="checkbox"] {
  appearance: none;
  flex: none;
  display: grid;
  place-items: center;
  width: 15px;
  height: 15px;
  margin-right: 7px;
  border: 1px solid #8f8f8f;
  border-radius: 2px;
  background: #fff;
}
input[type="radio"] { border-radius: 50%; }
input[type="radio"]:disabled { border-color: #d0d0d0; }
input[type="radio"]:checked::after { content: ""; width: 5px; height: 5px; border-radius: 50%; background: #17845a; }
input[type="radio"]:disabled:checked::after { background: #c4c4c4; }
input[type="checkbox"]:checked::after {
  content: "";
  width: 13px;
  height: 13px;
  margin: -3px 0 0 1px;
  background: #17845a;
  clip-path: polygon(5% 50%, 22% 38%, 42% 62%, 88% 0, 100% 0, 100% 12%, 46% 95%, 36% 95%);
}
input.faded, input.pale { border-color: #c4c4c4; }
input.faded:checked::after { background: #b5b5b5; }
.lead { margin-right: 6px; }
.first { margin-right: 9px; }
.help { margin-left: 6px; color: #1f74b5; font-weight: bold; text-decoration: none; }

.half:first-child { width: 375px; }
.half { display: flex; align-items: center; flex: none; }
.picker { display: flex; width: 210px; height: 26px; border: 1px solid #8e8e8e; border-radius: 3px; }
.picker select { appearance: none; flex: 1; padding: 0 3px; border: 0; background: none; color: #222; }
.picker span { display: grid; place-items: center; width: 21px; border-left: 1px solid #999; }

.note { display: flex; flex-direction: column; gap: 3px; margin-top: 9px; }
.note textarea { height: 60px; border: 1px solid #8e8e8e; border-right: 0; border-radius: 3px 0 0 0; resize: none; }
```
